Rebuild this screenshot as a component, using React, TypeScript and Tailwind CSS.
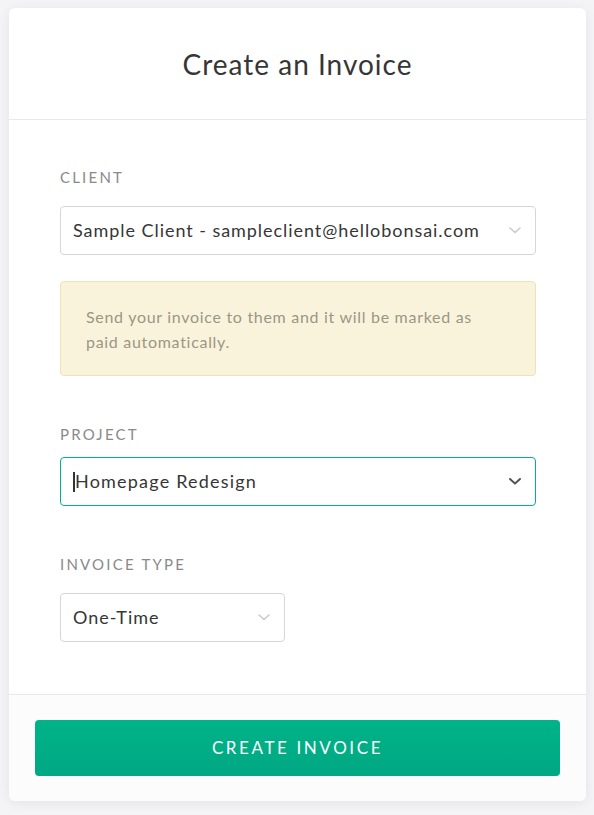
import React from 'react';

const FONT = { fontFamily: 'Lato, "Open Sans", "Liberation Sans", sans-serif' };

function Chevron({ dark = false }: { dark?: boolean }) {
  return (
    <svg width="12" height="7" viewBox="0 0 12 7" className="shrink-0">
      <path
        d="M1 1l5 4.5L11 1"
        fill="none"
        stroke={dark ? '#555555' : '#c9c9c9'}
        strokeWidth={dark ? 2 : 1.5}
        strokeLinecap="round"
        strokeLinejoin="round"
      />
    </svg>
  );
}

function Label({ children, className = '' }: { children: React.ReactNode; className?: string }) {
  return (
    <p className={`h-5 text-[15px] leading-5 uppercase tracking-[2.2px] text-[#8a8a8a] ${className}`}>
      {children}
    </p>
  );
}

export default function App() {
  return (
    <div className="min-h-screen bg-[#f4f4f6] pt-2 pl-[9px]" style={FONT}>
      <div className="w-[577px] h-[793px] flex flex-col rounded-md bg-white shadow-[0_2px_12px_rgba(0,0,0,0.07)] overflow-hidden">
        {/* Header */}
        <div className="h-[112px] flex items-center justify-center border-b border-[#e9e9ec]">
          <h1 className="text-[28px] tracking-[1px] text-[#363636] font-normal">Create an Invoice</h1>
        </div>

        {/* Body */}
        <div className="flex-1 pl-[51px] pr-[50px] pt-[47px]">
          <Label>Client</Label>
          <div className="mt-[19px] h-[49px] flex items-center justify-between pl-[12px] pr-[14px] rounded border border-[#d6d6d6]">
            <span className="text-[18px] tracking-[0.95px] text-[#363636]">Sample Client - sampleclient@hellobonsai.com</span>
            <Chevron />
          </div>

          <div className="mt-[26px] h-[95px] rounded border border-[#efe3b6] bg-[#faf3dc] pl-[25px] pr-[40px] pt-[22px]">
            <p className="text-[16px] leading-[25px] tracking-[0.7px] text-[#9b9785]">
              Send your invoice to them and it will be marked as paid automatically.
            </p>
          </div>

          <Label className="mt-[48px]">Project</Label>
          <div className="mt-[13px] h-[49px] flex items-center justify-between pl-[12px] pr-[14px] rounded border border-[#00b386]">
            <span className="flex items-center text-[18px] tracking-[1.2px] text-[#363636]">
              <span className="w-[2px] h-[20px] bg-[#333333]" />
              Homepage Redesign
            </span>
            <Chevron dark />
          </div>

          <Label className="mt-[48px]">Invoice Type</Label>
          <div className="mt-[19px] w-[225px] h-[49px] flex items-center justify-between pl-[12px] pr-[14px] rounded border border-[#d6d6d6]">
            <span className="text-[18px] tracking-[1px] text-[#363636]">One-Time</span>
            <Chevron />
          </div>
        </div>

        {/* Footer */}
        <div className="h-[107px] border-t border-[#e9e9ec] bg-[#fcfcfc] px-[26px] pt-[25px]">
          <button className="w-full h-[56px] rounded bg-gradient-to-b from-[#00b388] to-[#00a883] text-white text-[17px] uppercase tracking-[2.6px]">
            Create Invoice
          </button>
        </div>
      </div>
    </div>
  );
}
